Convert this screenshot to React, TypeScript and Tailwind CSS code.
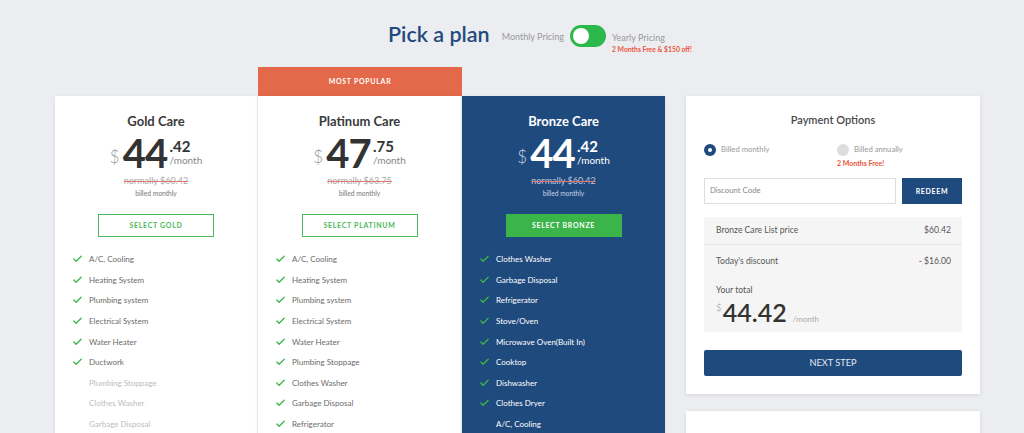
import { Check } from "lucide-react";

type Feature = { label: string; on: boolean };

type Plan = {
  name: string;
  whole: string;
  cents: string;
  normally: string;
  button: string;
  dark?: boolean;
  popular?: boolean;
  features: Feature[];
};

const on = (label: string): Feature => ({ label, on: true });
const off = (label: string): Feature => ({ label, on: false });

const plans: Plan[] = [
  {
    name: "Gold Care",
    whole: "44",
    cents: ".42",
    normally: "normally $60.42",
    button: "SELECT GOLD",
    features: [
      on("A/C, Cooling"),
      on("Heating System"),
      on("Plumbing system"),
      on("Electrical System"),
      on("Water Heater"),
      on("Ductwork"),
      off("Plumbing Stoppage"),
      off("Clothes Washer"),
      off("Garbage Disposal"),
      off("Refrigerator"),
    ],
  },
  {
    name: "Platinum Care",
    whole: "47",
    cents: ".75",
    normally: "normally $63.75",
    button: "SELECT PLATINUM",
    popular: true,
    features: [
      on("A/C, Cooling"),
      on("Heating System"),
      on("Plumbing system"),
      on("Electrical System"),
      on("Water Heater"),
      on("Plumbing Stoppage"),
      on("Clothes Washer"),
      on("Garbage Disposal"),
      on("Refrigerator"),
      on("Stove/Oven"),
    ],
  },
  {
    name: "Bronze Care",
    whole: "44",
    cents: ".42",
    normally: "normally $60.42",
    button: "SELECT BRONZE",
    dark: true,
    features: [
      on("Clothes Washer"),
      on("Garbage Disposal"),
      on("Refrigerator"),
      on("Stove/Oven"),
      on("Microwave Oven(Built In)"),
      on("Cooktop"),
      on("Dishwasher"),
      on("Clothes Dryer"),
      off("A/C, Cooling"),
      off("Heating System"),
    ],
  },
];

function PlanCard({ plan, width }: { plan: Plan; width: string }) {
  const dark = Boolean(plan.dark);
  return (
    <div className={`flex flex-col ${width} ${plan.popular ? "" : "pt-[29px]"}`}>
      {plan.popular && (
        <div className="h-[29px] bg-[#e3694a] flex items-center justify-center text-white text-[7px] font-bold tracking-[0.1em]">
          MOST POPULAR
        </div>
      )}
      <div
        className={`flex flex-col items-center pt-[16px] pb-6 shadow-[0_1px_4px_rgba(0,0,0,0.08)] ${
          dark ? "bg-[#1f4a7d] text-white" : "bg-white text-[#3a3a3a] border-r border-[#eeeeee]"
        }`}
      >
        <h2 className="text-[13px] leading-[18px] font-bold">{plan.name}</h2>
        <div className="flex items-start mt-[4px] h-[39px]">
          <span className={`text-[17px] leading-none font-light mt-[14px] mr-[3px] ${dark ? "text-[#c7d2e2]" : "text-[#999]"}`}>
            $
          </span>
          <span className={`text-[40px] leading-[34px] mt-[2px] font-bold tracking-[-0.02em] ${dark ? "text-white" : "text-[#333]"}`}>
            {plan.whole}
          </span>
          <div className="flex flex-col ml-[2px]">
            <span className={`text-[15px] leading-none font-bold mt-[5px] ${dark ? "text-white" : "text-[#333]"}`}>
              {plan.cents}
            </span>
            <span className={`text-[10px] leading-none mt-[1px] ${dark ? "text-white" : "text-[#888]"}`}>/month</span>
          </div>
        </div>
        <div
          className={`text-[9px] leading-[12px] mt-[2px] line-through decoration-[#e57373] ${
            dark ? "text-[#b9c5d8]" : "text-[#aaa]"
          }`}
        >
          {plan.normally}
        </div>
        <div className={`text-[6.7px] leading-[10px] mt-[1px] ${dark ? "text-[#c7d2e2]" : "text-[#777]"}`}>
          billed monthly
        </div>
        <button
          className={`mt-[16px] h-[23px] w-[116px] text-[7px] font-bold tracking-[0.1em] ${
            dark ? "bg-[#3bb54a] text-white" : "border-[1.5px] border-[#4cb95a] text-[#4cb95a] bg-white"
          }`}
        >
          {plan.button}
        </button>
        <ul className="self-stretch mt-[12px] pl-[17px]">
          {plan.features.map((f) => (
            <li key={f.label} className="h-[20.6px] flex items-center">
              <span className="w-[11px] mr-[6px] flex items-center">
                {f.on && <Check size={12} strokeWidth={2.8} className="text-[#3bb54a]" />}
              </span>
              <span
                className={`text-[8px] ${
                  dark ? "text-white" : f.on ? "text-[#6b6b6b]" : "text-[#bdbdbd]"
                }`}
              >
                {f.label}
              </span>
            </li>
          ))}
        </ul>
      </div>
    </div>
  );
}

function PaymentPanel() {
  return (
    <div className="bg-white px-[18px] pt-[16px] pb-[18px] shadow-[0_1px_4px_rgba(0,0,0,0.1)]">
      <h3 className="text-center text-[11px] leading-[16px] font-semibold text-[#4a4a4a]">Payment Options</h3>
      <div className="flex mt-[16px]">
        <div className="w-[133px] flex items-center h-[12px]">
          <span className="w-[12px] h-[12px] rounded-full bg-[#1f4a7d] flex items-center justify-center">
            <span className="w-[4px] h-[4px] rounded-full bg-white" />
          </span>
          <span className="ml-[5px] text-[7.7px] text-[#999]">Billed monthly</span>
        </div>
        <div className="flex flex-col">
          <div className="flex items-center h-[12px]">
            <span className="w-[12px] h-[12px] rounded-full bg-[#dddddd]" />
            <span className="ml-[5px] text-[7.7px] text-[#999]">Billed annually</span>
          </div>
          <span className="mt-[2px] text-[7px] leading-[10px] font-bold text-[#e8553a]">2 Months Free!</span>
        </div>
      </div>
      <div className="flex mt-[10px] h-[26px] gap-[6px]">
        <input
          className="flex-1 min-w-0 border border-[#dddddd] px-[5px] text-[7.8px] text-[#555] placeholder:text-[#888] outline-none"
          placeholder="Discount Code"
        />
        <button className="w-[60px] bg-[#1f4a7d] text-white text-[7px] font-bold tracking-[0.1em]">REDEEM</button>
      </div>
      <div className="mt-[13px] bg-[#f5f5f5] text-[#555]">
        <div className="h-[28px] flex items-center justify-between px-[12px] pr-[11px] border-b border-[#e6e6e6] text-[8.6px]">
          <span>Bronze Care List price</span>
          <span>$60.42</span>
        </div>
        <div className="px-[12px] pr-[11px] pt-[10px] pb-[7px]">
          <div className="flex justify-between text-[8.6px] leading-[12px]">
            <span>Today's discount</span>
            <span>- $16.00</span>
          </div>
          <div className="mt-[17px] text-[8.6px] leading-[12px]">Your total</div>
          <div className="flex items-end mt-[4px]">
            <span className="self-start text-[10px] leading-none text-[#999] font-light mt-[2px] mr-[1px]">$</span>
            <span className="text-[25px] leading-none font-semibold text-[#333]">44.42</span>
            <span className="ml-[6px] mb-[2px] text-[8px] leading-none text-[#aaa]">/month</span>
          </div>
        </div>
      </div>
      <button className="mt-[18px] w-full h-[26px] bg-[#1f4a7d] text-[#e3e8f2] text-[9.2px] rounded-[2px]">NEXT STEP</button>
    </div>
  );
}

export default function App() {
  return (
    <div className="min-h-screen bg-[#ecedf0] font-['Lato','Liberation_Sans',sans-serif] overflow-hidden">
      <div className="ml-[55px] w-[925px]">
        <header className="h-[67px] pt-[21px] pl-[333px] flex items-start">
          <h1 className="text-[21.5px] leading-[26px] font-semibold text-[#1f4a7d]">Pick a plan</h1>
          <span className="ml-[12px] mt-[9px] text-[9px] leading-[14px] text-[#999]">Monthly Pricing</span>
          <span className="ml-[6px] mt-[4px] w-[36px] h-[22px] rounded-full bg-[#2db84c] flex items-center pl-[3px]">
            <span className="w-[16px] h-[16px] rounded-full bg-white" />
          </span>
          <div className="ml-[6px] mt-[10px] flex flex-col">
            <span className="text-[9px] leading-[14px] text-[#999]">Yearly Pricing</span>
            <span className="mt-[-1px] text-[6.8px] leading-[10px] font-bold text-[#e8553a]">2 Months Free &amp; $150 off!</span>
          </div>
        </header>
        <div className="flex items-start">
          <div className="flex">
            <PlanCard plan={plans[0]} width="w-[203px]" />
            <PlanCard plan={plans[1]} width="w-[204px]" />
            <PlanCard plan={plans[2]} width="w-[203px]" />
          </div>
          <div className="ml-[21px] w-[294px] pt-[29px] flex flex-col gap-[17px]">
            <PaymentPanel />
            <div className="bg-white h-[120px] shadow-[0_1px_4px_rgba(0,0,0,0.1)]" />
          </div>
        </div>
      </div>
    </div>
  );
}
